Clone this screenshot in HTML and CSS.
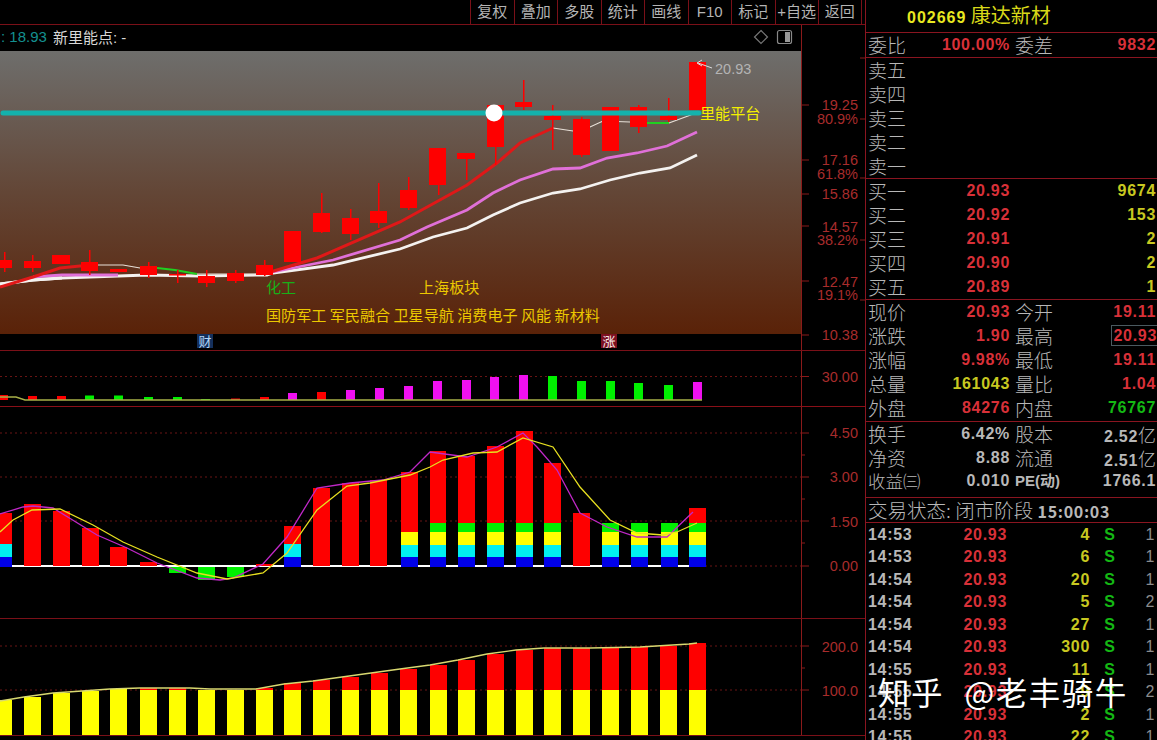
FILE: index.html
```html
<!DOCTYPE html>
<html lang="zh-CN">
<head>
    <meta charset="UTF-8">
    <title>康达新材 002669</title>
    <link rel="stylesheet" href="styles.css">
</head>
<body>
<div class="screen">
    <!-- K线区 -->
    <div class="charts">
        <div class="toolbar">
            <span class="tool">复权</span><span class="tool">叠加</span><span class="tool">多股</span><span class="tool">统计</span><span class="tool">画线</span><span class="tool">F10</span><span class="tool">标记</span><span class="tool">+自选</span><span class="tool">返回</span>
        </div>

        <div class="pane pane-info">
            <div class="plot info-row">
                <span class="info-val">: 18.93</span>
                <span class="info-name">新里能点: -</span>
                <svg class="info-icons" width="46" height="18" viewBox="0 0 46 18">
                    <path d="M9 2.5 L15.5 9 L9 15.5 L2.5 9 Z" fill="none" stroke="#777" stroke-width="1.2"/>
                    <rect x="25.5" y="2.5" width="14" height="13" rx="2" fill="none" stroke="#888" stroke-width="1.2"/>
                    <rect x="33" y="4" width="5" height="10" fill="#999"/>
                </svg>
            </div>
            <svg class="axis" width="64" height="26" viewBox="0 0 64 26"></svg>
        </div>

        <!-- 主图 -->
        <div class="pane pane-main">
            <svg class="plot" width="801" height="283" viewBox="0 51 801 283">
                <defs>
                    <linearGradient id="bg" x1="0" y1="0" x2="0" y2="1">
                        <stop offset="0" stop-color="#6e6e6c"/>
                        <stop offset="0.5" stop-color="#634636"/>
                        <stop offset="1" stop-color="#5a2208"/>
                    </linearGradient>
                </defs>
                <rect x="0" y="51" width="801" height="283" fill="url(#bg)"/>

                <polyline class="ma-white" points="0,284 33,280 62,278 90,277 147,275 200,276 267,275 273,273 333,265 400,249 433,237 467,228 493,215 520,203 553,193 580,189 610,180 640,173 670,168 697,155"/>
                <polyline class="ma-pink" points="273,272 333,260 400,240 427,227 467,210 493,193 520,180 553,169 580,168 607,158 637,153 667,146 697,132"/>
                <polyline class="ma-pink" points="33,277 62,275 118,275"/>
                <polyline class="ma-white" points="0,284 33,280 62,278"/>
                <polyline class="ma-red" points="0,287 33,277 60,268 80,266 96,266"/>
                <polyline class="ma-red" points="267,273 317,258 400,222 467,185 497,163 520,143 553,128"/>
                <polyline class="ma-thin" points="96,265 123,265 140,268 157,268"/>
                <polyline class="ma-green" points="157,268 175,270 197,274"/>
                <polyline class="ma-thin" points="197,274 264,274"/>
                <polyline class="ma-thin" points="553,128 573,131 590,127 603,121 630,122 647,123"/>
                <polyline class="ma-green" points="647,123 669,123"/>
                <polyline class="ma-thin" points="669,123 688,116 698,112"/>

                <g class="candles">
                    <rect x="4" y="252" width="1.5" height="20"/><rect x="-3" y="260" width="15" height="8"/>
                    <rect x="32" y="255" width="1.5" height="17"/><rect x="24" y="261" width="17" height="7"/>
                    <rect x="52" y="255" width="18" height="9"/>
                    <rect x="89" y="250" width="1.5" height="25"/><rect x="81" y="262" width="17" height="9"/>
                    <rect x="110" y="269" width="17" height="3"/>
                    <rect x="148" y="262" width="1.5" height="16"/><rect x="140" y="266" width="17" height="9"/>
                    <rect x="177" y="270" width="1.5" height="13"/><rect x="169" y="274" width="17" height="1.5"/>
                    <rect x="206" y="270" width="1.5" height="17"/><rect x="198" y="276" width="17" height="7"/>
                    <rect x="235" y="270" width="1.5" height="13"/><rect x="227" y="273" width="17" height="8"/>
                    <rect x="264" y="260" width="1.5" height="16"/><rect x="256" y="265" width="17" height="10"/>
                    <rect x="284" y="231" width="17" height="31"/>
                    <rect x="321" y="193" width="1.5" height="40"/><rect x="313" y="213" width="17" height="19"/>
                    <rect x="350" y="209" width="1.5" height="31"/><rect x="342" y="218" width="17" height="16"/>
                    <rect x="378" y="183" width="1.5" height="45"/><rect x="370" y="211" width="17" height="12"/>
                    <rect x="408" y="177" width="1.5" height="33"/><rect x="400" y="190" width="17" height="18"/>
                    <rect x="438" y="148" width="1.5" height="47"/><rect x="429" y="148" width="17" height="37"/>
                    <rect x="466" y="153" width="1.5" height="27"/><rect x="457" y="153" width="18" height="6"/>
                    <rect x="495" y="147" width="1.5" height="18"/><rect x="487" y="105" width="17" height="42"/>
                    <rect x="523" y="80" width="1.5" height="30"/><rect x="515" y="102" width="17" height="5"/>
                    <rect x="552" y="105" width="1.5" height="45"/><rect x="544" y="116" width="17" height="4"/>
                    <rect x="581" y="117" width="1.5" height="40"/><rect x="573" y="119" width="17" height="36"/>
                    <rect x="602" y="107" width="17" height="44"/>
                    <rect x="638" y="105" width="1.5" height="28"/><rect x="630" y="107" width="17" height="20"/>
                    <rect x="668" y="98" width="1.5" height="24"/><rect x="660" y="116" width="17" height="4"/>
                    <rect x="689" y="62" width="17" height="48"/>
                </g>

                <line class="platform" x1="3" y1="113" x2="699" y2="113"/>
                <circle cx="494" cy="113" r="8.5" fill="#fff"/>

                <path d="M712 68 L698 63 M702 60 L697 63 L702 66" fill="none" stroke="#ddd" stroke-width="1"/>
                <text class="last-price" x="715" y="74">20.93</text>
                <text class="tag-yellow" x="700" y="119">里能平台</text>
                <text class="tag-green" x="266" y="293">化工</text>
                <text class="tag-orange" x="419" y="293">上海板块</text>
                <text class="tag-orange" x="266" y="321">国防军工 军民融合 卫星导航 消费电子 风能 新材料</text>
            </svg>
            <svg class="axis" width="64" height="283" viewBox="801 51 64 283">
                <path class="tick" d="M801 105h7 M801 160h7 M801 194h7 M801 226h7 M801 281h7 M859 58h6 M859 119h6 M859 178h6 M859 240h6 M859 300h6"/>
                <text x="857" y="110">19.25</text>
                <text x="857" y="124">80.9%</text>
                <text x="857" y="165">17.16</text>
                <text x="857" y="179">61.8%</text>
                <text x="857" y="199">15.86</text>
                <text x="857" y="232">14.57</text>
                <text x="857" y="245">38.2%</text>
                <text x="857" y="287">12.47</text>
                <text x="857" y="300">19.1%</text>
            </svg>
        </div>

        <!-- 财 / 涨 标记 -->
        <div class="pane pane-strip">
            <div class="plot badge-row">
                <span class="badge badge-cai">财</span>
                <span class="badge badge-zhang">涨</span>
            </div>
            <svg class="axis" width="64" height="16" viewBox="801 334 64 16">
                <path class="tick" d="M801 335h7"/>
                <text x="857" y="340">10.38</text>
            </svg>
        </div>

        <!-- 量 -->
        <div class="pane pane-vol">
            <svg class="plot" width="801" height="55" viewBox="0 351 801 55">
                <line class="grid" x1="0" y1="376.5" x2="801" y2="376.5"/>
                <g class="fill-red">
                    <rect x="0" y="395" width="8" height="5"/><rect x="28" y="396" width="9" height="4"/><rect x="57" y="396" width="9" height="4"/>
                    <rect x="231" y="398.5" width="9" height="1.5"/><rect x="260" y="397" width="9" height="3"/><rect x="317" y="392" width="9" height="8"/>
                </g>
                <g class="fill-green">
                    <rect x="85" y="395.5" width="9" height="4.5"/><rect x="114" y="395.5" width="9" height="4.5"/><rect x="144" y="397" width="9" height="3"/>
                    <rect x="173" y="397" width="9" height="3"/><rect x="201" y="399" width="9" height="1"/>
                    <rect x="548" y="376" width="9" height="24"/><rect x="577" y="381" width="9" height="19"/><rect x="606" y="381" width="9" height="19"/>
                    <rect x="634" y="383" width="9" height="17"/><rect x="664" y="385" width="9" height="15"/>
                </g>
                <g class="fill-magenta">
                    <rect x="288" y="393" width="9" height="7"/><rect x="346" y="390" width="9" height="10"/><rect x="375" y="388" width="9" height="12"/>
                    <rect x="404" y="386" width="9" height="14"/><rect x="433" y="381" width="9" height="19"/><rect x="462" y="380" width="9" height="20"/>
                    <rect x="490" y="377" width="9" height="23"/><rect x="519" y="375" width="9" height="25"/><rect x="693" y="382" width="9" height="18"/>
                </g>
                <polyline class="vol-line" points="0,397 16,397 25,400 702,400"/>
            </svg>
            <svg class="axis" width="64" height="55" viewBox="801 351 64 55">
                <path class="tick" d="M801 376.5h7"/>
                <text x="857" y="382">30.00</text>
            </svg>
        </div>

        <!-- 能量柱 -->
        <div class="pane pane-macd">
            <svg class="plot" width="801" height="211" viewBox="0 407 801 211">
                <line class="grid" x1="0" y1="433" x2="801" y2="433"/>
                <line class="grid" x1="0" y1="477" x2="801" y2="477"/>
                <line class="grid" x1="0" y1="521" x2="801" y2="521"/>
                <line class="grid" x1="0" y1="566" x2="801" y2="566"/>
                <line class="zero-line" x1="0" y1="566" x2="704" y2="566"/>

                <g class="fill-red">
                    <rect x="-4" y="513" width="16" height="31"/><rect x="24" y="504" width="17" height="62"/><rect x="53" y="511" width="17" height="55"/>
                    <rect x="82" y="528" width="17" height="38"/><rect x="110" y="547" width="17" height="19"/><rect x="140" y="562" width="17" height="4"/>
                    <rect x="256" y="564" width="17" height="2"/><rect x="284" y="526" width="17" height="18"/>
                    <rect x="313" y="488" width="17" height="78"/><rect x="342" y="483" width="17" height="83"/><rect x="370" y="480" width="17" height="86"/>
                    <rect x="401" y="472" width="17" height="60"/><rect x="430" y="451" width="16" height="72"/><rect x="458" y="456" width="17" height="67"/>
                    <rect x="487" y="446" width="17" height="77"/><rect x="516" y="431" width="17" height="92"/><rect x="544" y="463" width="17" height="60"/>
                    <rect x="573" y="513" width="17" height="53"/><rect x="689" y="508" width="17" height="15"/>
                </g>
                <g class="fill-green">
                    <rect x="169" y="567" width="17" height="6"/><rect x="198" y="567" width="17" height="13"/><rect x="227" y="567" width="17" height="10"/>
                    <rect x="430" y="523" width="16" height="9"/><rect x="458" y="523" width="17" height="9"/><rect x="487" y="523" width="17" height="9"/>
                    <rect x="516" y="523" width="17" height="9"/><rect x="544" y="523" width="17" height="9"/><rect x="602" y="523" width="17" height="9"/>
                    <rect x="631" y="523" width="17" height="9"/><rect x="661" y="523" width="17" height="9"/><rect x="689" y="523" width="17" height="9"/>
                </g>
                <g class="fill-yellow">
                    <rect x="401" y="532" width="17" height="13"/><rect x="430" y="532" width="16" height="13"/><rect x="458" y="532" width="17" height="13"/>
                    <rect x="487" y="532" width="17" height="13"/><rect x="516" y="532" width="17" height="13"/><rect x="544" y="532" width="17" height="13"/>
                    <rect x="602" y="532" width="17" height="13"/><rect x="631" y="532" width="17" height="13"/><rect x="661" y="532" width="17" height="13"/>
                    <rect x="689" y="532" width="17" height="13"/>
                </g>
                <g class="fill-cyan">
                    <rect x="-4" y="544" width="16" height="13"/><rect x="284" y="544" width="17" height="13"/><rect x="401" y="545" width="17" height="12"/>
                    <rect x="430" y="545" width="16" height="12"/><rect x="458" y="545" width="17" height="12"/><rect x="487" y="545" width="17" height="12"/>
                    <rect x="516" y="545" width="17" height="12"/><rect x="544" y="545" width="17" height="12"/><rect x="602" y="545" width="17" height="12"/>
                    <rect x="631" y="545" width="17" height="12"/><rect x="661" y="545" width="17" height="12"/><rect x="689" y="545" width="17" height="12"/>
                </g>
                <g class="fill-blue">
                    <rect x="-4" y="557" width="16" height="10"/><rect x="284" y="557" width="17" height="10"/><rect x="401" y="557" width="17" height="10"/>
                    <rect x="430" y="557" width="16" height="10"/><rect x="458" y="557" width="17" height="10"/><rect x="487" y="557" width="17" height="10"/>
                    <rect x="516" y="557" width="17" height="10"/><rect x="544" y="557" width="17" height="10"/><rect x="602" y="557" width="17" height="10"/>
                    <rect x="631" y="557" width="17" height="10"/><rect x="661" y="557" width="17" height="10"/><rect x="689" y="557" width="17" height="10"/>
                </g>

                <polyline class="line-purple" points="0,514 23,507 33,506 53,508 97,535 127,548 157,563 197,578 220,580 233,578 263,564 287,537 317,488 350,483 383,480 410,472 430,452 467,457 497,447 523,433 537,447 557,470 580,513 607,527 637,537 667,537 693,512"/>
                <polyline class="line-yellow" points="0,532 13,520 32,510 60,509 93,525 123,542 157,557 197,573 227,579 263,573 287,553 317,510 347,486 370,483 410,475 430,467 443,460 473,453 497,452 523,438 553,447 580,487 610,520 637,533 663,535 677,532 697,523"/>
            </svg>
            <svg class="axis" width="64" height="211" viewBox="801 407 64 211">
                <path class="tick" d="M801 433h7 M801 477h7 M801 521h7 M801 566h7 M801 455h3 M801 499h3 M801 543h3"/>
                <text x="857" y="438">4.50</text>
                <text x="857" y="482">3.00</text>
                <text x="857" y="527">1.50</text>
                <text x="857" y="571">0.00</text>
            </svg>
        </div>

        <!-- 底部指标 -->
        <div class="pane pane-bottom">
            <svg class="plot" width="801" height="116" viewBox="0 619 801 116">
                <line class="grid" x1="0" y1="646" x2="801" y2="646"/>
                <line class="grid" x1="0" y1="690" x2="801" y2="690"/>
                <g class="fill-red">
                    <rect x="140" y="688" width="17" height="2"/><rect x="169" y="688" width="17" height="2"/><rect x="256" y="688" width="17" height="2"/>
                    <rect x="284" y="683" width="17" height="7"/><rect x="313" y="680" width="17" height="10"/><rect x="342" y="677" width="17" height="13"/>
                    <rect x="371" y="673" width="17" height="17"/><rect x="400" y="669" width="17" height="21"/><rect x="430" y="665" width="17" height="25"/>
                    <rect x="458" y="660" width="17" height="30"/><rect x="487" y="654" width="17" height="36"/><rect x="516" y="650" width="17" height="40"/>
                    <rect x="544" y="648" width="17" height="42"/><rect x="573" y="648" width="17" height="42"/><rect x="602" y="647" width="17" height="43"/>
                    <rect x="631" y="647" width="17" height="43"/><rect x="660" y="646" width="17" height="44"/><rect x="689" y="643" width="17" height="47"/>
                </g>
                <g class="fill-yellow">
                    <rect x="-4" y="700" width="16" height="35"/><rect x="24" y="697" width="17" height="38"/><rect x="53" y="693" width="17" height="42"/>
                    <rect x="82" y="691" width="17" height="44"/><rect x="110" y="689" width="17" height="46"/><rect x="140" y="690" width="17" height="45"/>
                    <rect x="169" y="690" width="17" height="45"/><rect x="198" y="690" width="17" height="45"/><rect x="227" y="690" width="17" height="45"/>
                    <rect x="256" y="690" width="17" height="45"/><rect x="284" y="690" width="17" height="45"/><rect x="313" y="690" width="17" height="45"/>
                    <rect x="342" y="690" width="17" height="45"/><rect x="371" y="690" width="17" height="45"/><rect x="400" y="690" width="17" height="45"/>
                    <rect x="430" y="690" width="17" height="45"/><rect x="458" y="690" width="17" height="45"/><rect x="487" y="690" width="17" height="45"/>
                    <rect x="516" y="690" width="17" height="45"/><rect x="544" y="690" width="17" height="45"/><rect x="573" y="690" width="17" height="45"/>
                    <rect x="602" y="690" width="17" height="45"/><rect x="631" y="690" width="17" height="45"/><rect x="660" y="690" width="17" height="45"/>
                    <rect x="689" y="690" width="17" height="45"/>
                </g>
                <polyline class="line-olive" points="0,701 24,697 53,693 82,691 110,689 140,688 190,688 210,689 256,689 284,684 313,681 342,677 371,673 400,669 430,665 458,660 487,654 516,650 544,648 590,648 640,647 689,644 697,643"/>
            </svg>
            <svg class="axis" width="64" height="116" viewBox="801 619 64 116">
                <path class="tick" d="M801 646h7 M801 690h7 M801 668h3"/>
                <text x="857" y="652">200.0</text>
                <text x="857" y="696">100.0</text>
            </svg>
        </div>
    </div>

    <!-- 右侧盘口 -->
    <div class="side">
        <div class="stock-title"><span class="code">002669</span> <span class="stock-name">康达新材</span></div>

        <div class="quote-block block-ratio">
            <div class="row"><span class="lbl">委比</span><span class="num red">100.00%</span><span class="lbl">委差</span><span class="num red">9832</span></div>
        </div>

        <div class="quote-block block-book">
            <div class="row"><span class="lbl">卖五</span></div>
            <div class="row"><span class="lbl">卖四</span></div>
            <div class="row"><span class="lbl">卖三</span></div>
            <div class="row"><span class="lbl">卖二</span></div>
            <div class="row"><span class="lbl">卖一</span></div>
        </div>

        <div class="quote-block block-book">
            <div class="row book"><span class="lbl">买一</span><span class="num red">20.93</span><span class="num yellow">9674</span></div>
            <div class="row book"><span class="lbl">买二</span><span class="num red">20.92</span><span class="num yellow">153</span></div>
            <div class="row book"><span class="lbl">买三</span><span class="num red">20.91</span><span class="num yellow">2</span></div>
            <div class="row book"><span class="lbl">买四</span><span class="num red">20.90</span><span class="num yellow">2</span></div>
            <div class="row book"><span class="lbl">买五</span><span class="num red">20.89</span><span class="num yellow">1</span></div>
        </div>

        <div class="quote-block block-quote">
            <div class="row"><span class="lbl">现价</span><span class="num red">20.93</span><span class="lbl">今开</span><span class="num red">19.11</span></div>
            <div class="row"><span class="lbl">涨跌</span><span class="num red">1.90</span><span class="lbl">最高</span><span class="num red"><span class="boxed">20.93</span></span></div>
            <div class="row"><span class="lbl">涨幅</span><span class="num red">9.98%</span><span class="lbl">最低</span><span class="num red">19.11</span></div>
            <div class="row"><span class="lbl">总量</span><span class="num yellow">161043</span><span class="lbl">量比</span><span class="num red">1.04</span></div>
            <div class="row"><span class="lbl">外盘</span><span class="num red">84276</span><span class="lbl">内盘</span><span class="num green">76767</span></div>
        </div>

        <div class="quote-block block-fund">
            <div class="row"><span class="lbl">换手</span><span class="num gray">6.42%</span><span class="lbl">股本</span><span class="num gray">2.52<span class="unit">亿</span></span></div>
            <div class="row"><span class="lbl">净资</span><span class="num gray">8.88</span><span class="lbl">流通</span><span class="num gray">2.51<span class="unit">亿</span></span></div>
            <div class="row"><span class="lbl lbl-wide">收益㈢</span><span class="num gray">0.010</span><span class="lbl lbl-pe">PE(动)</span><span class="num gray">1766.1</span></div>
        </div>

        <div class="status">交易状态: 闭市阶段 <span class="num gray">15:00:03</span></div>

        <div class="ticks">
            <div class="tick-row"><span class="num gray">14:53</span><span class="num red">20.93</span><span class="num yellow">4</span><span class="num green">S</span><span class="num dim">1</span></div>
            <div class="tick-row"><span class="num gray">14:53</span><span class="num red">20.93</span><span class="num yellow">6</span><span class="num green">S</span><span class="num dim">1</span></div>
            <div class="tick-row"><span class="num gray">14:54</span><span class="num red">20.93</span><span class="num yellow">20</span><span class="num green">S</span><span class="num dim">1</span></div>
            <div class="tick-row"><span class="num gray">14:54</span><span class="num red">20.93</span><span class="num yellow">5</span><span class="num green">S</span><span class="num dim">2</span></div>
            <div class="tick-row"><span class="num gray">14:54</span><span class="num red">20.93</span><span class="num yellow">27</span><span class="num green">S</span><span class="num dim">1</span></div>
            <div class="tick-row"><span class="num gray">14:54</span><span class="num red">20.93</span><span class="num yellow">300</span><span class="num green">S</span><span class="num dim">1</span></div>
            <div class="tick-row"><span class="num gray">14:55</span><span class="num red">20.93</span><span class="num yellow">11</span><span class="num green">S</span><span class="num dim">1</span></div>
            <div class="tick-row"><span class="num gray">14:55</span><span class="num red">20.93</span><span class="num yellow">9</span><span class="num green">S</span><span class="num dim">2</span></div>
            <div class="tick-row"><span class="num gray">14:55</span><span class="num red">20.93</span><span class="num yellow">2</span><span class="num green">S</span><span class="num dim">1</span></div>
            <div class="tick-row"><span class="num gray">14:55</span><span class="num red">20.93</span><span class="num yellow">22</span><span class="num green">S</span><span class="num dim">1</span></div>
        </div>
    </div>

    <!-- 水印 -->
    <div class="watermark">知乎 @老丰骑牛</div>
</div>
</body>
</html>
```

FILE: styles.css
```css
html, body {
    margin: 0;
    padding: 0;
    background-color: #000;
}

.screen {
    position: relative;
    display: flex;
    width: 1157px;
    height: 740px;
    overflow: hidden;
    background-color: #000;
    font-family: "Liberation Sans", "Noto Sans CJK SC", sans-serif;
}

/* 左侧图表 */
.charts {
    width: 865px;
    flex: none;
    display: flex;
    flex-direction: column;
}

.toolbar {
    height: 24px;
    padding-left: 470px;
    display: flex;
    border-bottom: 1px solid #7a1018;
}

.tool {
    width: 43.5px;
    box-sizing: border-box;
    border-left: 1px solid #7a1018;
    color: #b4b4b4;
    font-size: 15px;
    line-height: 24px;
    text-align: center;
    white-space: nowrap;
}

.tool:last-child {
    border-right: 1px solid #7a1018;
}

.pane {
    display: flex;
    flex: none;
}

.plot {
    display: block;
    width: 801px;
    flex: none;
}

.axis {
    display: block;
    flex: none;
    border-left: 1px solid #8a1a1a;
    overflow: visible;
}

.axis text {
    fill: #a82c2c;
    font-size: 14.5px;
    text-anchor: end;
}

.tick {
    stroke: #8a1a1a;
    stroke-width: 1;
    fill: none;
}

.pane-info { height: 26px; }
.pane-main { height: 283px; }
.pane-strip { height: 16px; border-bottom: 1px solid #7a1018; }
.pane-vol { height: 55px; border-bottom: 1px solid #8a1018; }
.pane-macd { height: 211px; border-bottom: 1px solid #7a1018; }
.pane-bottom { height: 116px; border-bottom: 1px solid #7a1018; }

.info-row {
    display: flex;
    align-items: center;
    padding-bottom: 3px;
    box-sizing: border-box;
    font-size: 15px;
}

.info-val {
    color: #149090;
    width: 53px;
    padding-left: 1px;
    box-sizing: border-box;
    white-space: pre;
}

.info-name {
    color: #d8d8d8;
    font-size: 15px;
    flex: 1;
}

.info-icons {
    margin-right: 3px;
}

/* 主图线 */
.ma-white, .ma-pink, .ma-red, .ma-thin, .ma-green,
.line-purple, .line-yellow, .line-olive, .vol-line {
    fill: none;
}

.ma-white { stroke: #f4f2f0; stroke-width: 2.8; }
.ma-pink { stroke: #e070d8; stroke-width: 2.8; }
.ma-red { stroke: #e01818; stroke-width: 3; }
.ma-thin { stroke: #e8e0d8; stroke-width: 1.2; }
.ma-green { stroke: #20d020; stroke-width: 2; }

.candles { fill: #fe0000; }

.platform {
    stroke: #14b2ac;
    stroke-width: 5;
    stroke-linecap: round;
}

.last-price {
    fill: #b4b4b4;
    font-size: 14.5px;
}

.tag-yellow, .tag-orange, .tag-green {
    font-family: "Noto Sans CJK SC", sans-serif;
    font-size: 15.1px;
}

.tag-yellow { fill: #f4f000; }
.tag-orange { fill: #ecc800; }
.tag-green { fill: #18b018; }

.badge-row {
    position: relative;
}

.badge {
    position: absolute;
    top: 0;
    width: 16px;
    height: 14px;
    font-size: 13px;
    line-height: 14px;
    text-align: center;
    font-family: "Noto Sans CJK SC", sans-serif;
}

.badge-cai { left: 197px; background-color: #14305c; color: #b4d8f8; }
.badge-zhang { left: 601px; background-color: #7c1020; color: #f8e8e8; }

.grid {
    stroke: #6a1414;
    stroke-width: 1;
    stroke-dasharray: 2 3;
}

.zero-line { stroke: #fff; stroke-width: 2; }
.vol-line { stroke: #a8b048; stroke-width: 1.5; }
.line-purple { stroke: #c028c8; stroke-width: 1.3; }
.line-yellow { stroke: #e8e020; stroke-width: 1.3; }
.line-olive { stroke: #d8d870; stroke-width: 1.3; }

.fill-red { fill: #fe0000; }
.fill-green { fill: #00f000; }
.fill-magenta { fill: #f010f0; }
.fill-yellow { fill: #ffff00; }
.fill-cyan { fill: #00f0f0; }
.fill-blue { fill: #0000e8; }

/* 右侧盘口 */
.side {
    width: 292px;
    flex: none;
    box-sizing: border-box;
    border-left: 1px solid #8a1520;
    padding-left: 2px;
}

.stock-title {
    height: 32px;
    margin-left: -2px;
    padding-left: 41px;
    line-height: 30px;
    color: #e8e820;
    border-bottom: 1px solid #8a1520;
    font-size: 16px;
    white-space: nowrap;
}

.code {
    font-weight: bold;
    font-size: 16px;
    letter-spacing: 1px;
}

.stock-name {
    font-family: "Noto Sans CJK SC", sans-serif;
    font-size: 20px;
    color: #d8d818;
}

.quote-block {
    margin-left: -2px;
    padding-left: 2px;
    border-bottom: 1px solid #8a1520;
}

.block-ratio { height: 24px; }
.block-book { height: 120px; }
.block-quote { height: 121px; }
.block-fund { height: 75px; }

.row {
    display: grid;
    grid-template-columns: 40px 102px 46px 1fr;
    height: 24px;
    line-height: 24px;
    white-space: nowrap;
}

.block-fund .row { height: 23.6px; line-height: 24px; }

.row.book {
    grid-template-columns: 40px 102px 1fr;
}

.lbl {
    color: #b8b8b8;
    font-family: "Noto Sans CJK SC", sans-serif;
    font-size: 19px;
    font-weight: 300;
}

.lbl-wide {
    font-size: 17.5px;
    margin-right: -30px;
}

.lbl-pe {
    font-family: "Liberation Sans", "Noto Sans CJK SC", sans-serif;
    font-size: 15px;
    font-weight: bold;
}

.num {
    font-weight: bold;
    font-size: 16px;
    letter-spacing: 0.7px;
    text-align: right;
}

.row .num:last-child { padding-right: 1px; }
.row .lbl + .num + .lbl { padding-left: 5px; }

.red { color: #d83038; }
.yellow { color: #c8c820; }
.green { color: #14b814; }
.gray { color: #b8b8b8; }
.dim { color: #8c8c8c; font-weight: normal; }

.unit {
    font-family: "Noto Sans CJK SC", sans-serif;
    font-weight: 300;
    font-size: 18px;
    letter-spacing: 0;
}

.boxed {
    display: inline-block;
    line-height: 19px;
    border: 1px solid #4a5a60;
    padding: 0 0 0 1px;
    margin-right: -2px;
}

.status {
    height: 24px;
    margin-left: -2px;
    padding-left: 2px;
    line-height: 24px;
    border-bottom: 1px solid #8a1520;
    color: #b8b8b8;
    font-family: "Noto Sans CJK SC", sans-serif;
    font-size: 19.5px;
    font-weight: 300;
    white-space: nowrap;
}

.ticks {
    padding-top: 1px;
}

.tick-row {
    display: grid;
    grid-template-columns: 44px 95px 83px 40px 1fr;
    height: 22.45px;
    line-height: 22.45px;
    white-space: nowrap;
}

.tick-row .num:first-child { text-align: left; }
.tick-row .num:nth-child(4) { text-align: center; }
.tick-row .num:last-child { padding-right: 2px; }

.watermark {
    position: absolute;
    left: 878px;
    top: 669px;
    color: #fff;
    font-family: "Noto Sans CJK SC", sans-serif;
    font-size: 31.5px;
    letter-spacing: 1.5px;
    word-spacing: 12px;
    line-height: 44px;
    white-space: nowrap;
}
```
